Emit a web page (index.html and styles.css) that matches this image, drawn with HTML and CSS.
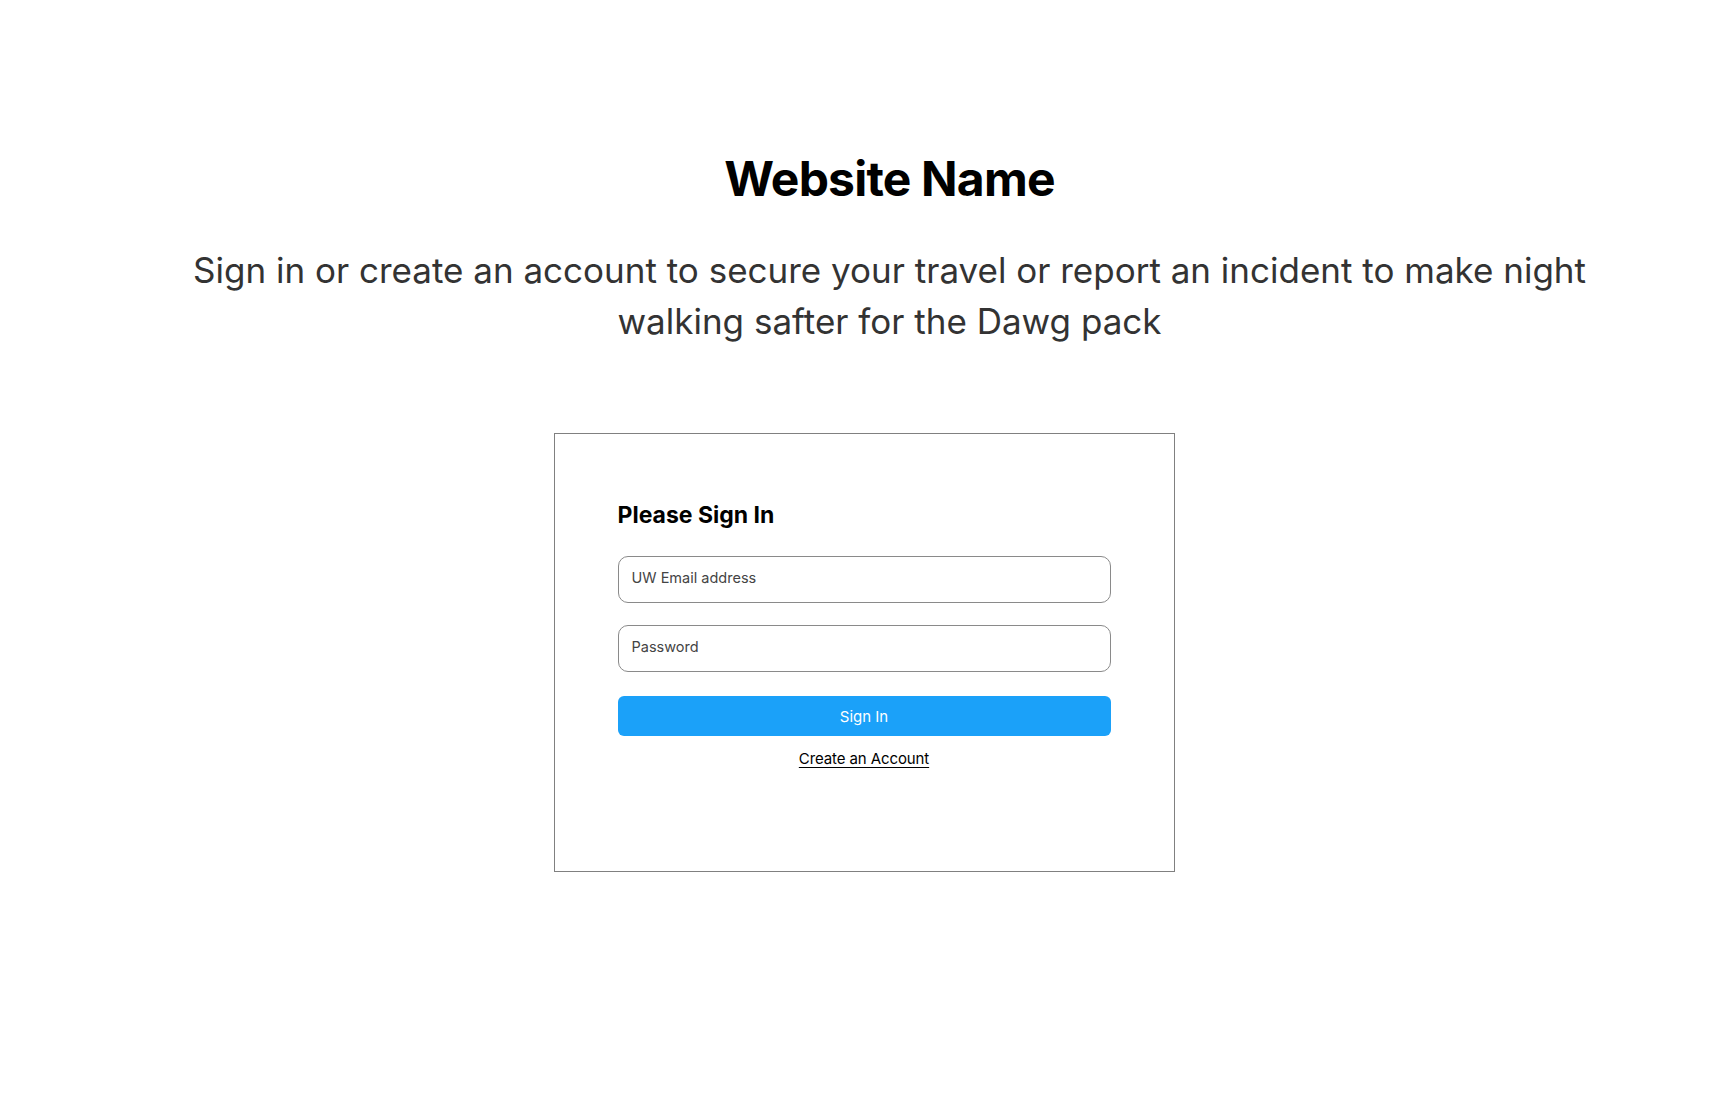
FILE: index.html
```html
<!DOCTYPE html>
<html lang="en">
<head>
<meta charset="utf-8">
<title>Website Name</title>
<link rel="stylesheet" href="styles.css">
</head>
<body>
  <header class="hero">
    <h1 class="title">Website Name</h1>
    <p class="subtitle">Sign in or create an account to secure your travel or report an incident to make night walking safter for the Dawg pack</p>
  </header>
  <main class="auth">
    <form class="card" onsubmit="return false">
      <h2 class="card-title">Please Sign In</h2>
      <input class="field field-email" type="email" placeholder="UW Email address">
      <input class="field field-password" type="password" placeholder="Password">
      <button class="btn" type="submit">Sign In</button>
      <a class="link" href="#">Create an Account</a>
    </form>
  </main>
</body>
</html>
```
FILE: styles.css
```css
* {
  box-sizing: border-box;
}

html, body {
  margin: 0;
  padding: 0;
  background: #ffffff;
}

body {
  font-family: Inter, "Noto Sans", "Liberation Sans", sans-serif;
  color: #000;
}

.hero {
  padding: 150px 0 0 51px;
  text-align: center;
}

.title {
  margin: 0;
  font-size: 48px;
  line-height: 58px;
  font-weight: 700;
  letter-spacing: -0.8px;
  color: #000;
}

.subtitle {
  margin: 37px auto 0;
  max-width: 1460px;
  font-size: 35px;
  line-height: 51px;
  font-weight: 400;
  color: #333333;
}

.auth {
  display: flex;
  justify-content: center;
  padding-top: 86px;
}

.card {
  width: 621px;
  height: 439px;
  padding: 68px 63px 0;
  border: 1px solid #808080;
  display: flex;
  flex-direction: column;
}

.card-title {
  margin: 0 0 27px;
  font-size: 23px;
  line-height: 27px;
  font-weight: 700;
  color: #000;
}

.field {
  display: block;
  width: 100%;
  height: 47px;
  margin: 0;
  padding: 0 13px 4px;
  border: 1px solid #8a8a8a;
  border-radius: 10px;
  font-family: inherit;
  font-size: 14.5px;
  color: #333;
  background: #fff;
  outline: none;
}

.field::placeholder {
  color: #444444;
  opacity: 1;
}

.field-password {
  margin-top: 22px;
}

.btn {
  margin-top: 24px;
  height: 40px;
  width: 100%;
  border: none;
  border-radius: 6px;
  background: #1ba1f9;
  color: #ffffff;
  font-family: inherit;
  font-size: 15px;
  cursor: pointer;
}

.link {
  align-self: center;
  margin-top: 14px;
  font-size: 15px;
  line-height: 18px;
  letter-spacing: -0.1px;
  color: #000;
  text-decoration: underline;
  text-underline-offset: 3px;
}
```
